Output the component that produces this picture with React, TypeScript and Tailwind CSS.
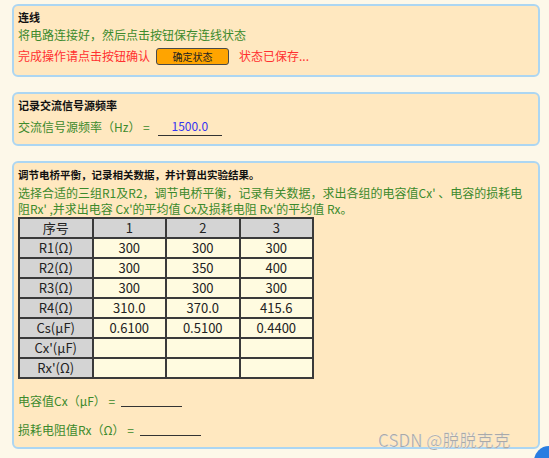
import React from "react";

const font = { fontFamily: '"Noto Sans CJK SC", "Noto Sans", sans-serif' };

const rows: { label: string; values: string[] }[] = [
  { label: "R1(Ω)", values: ["300", "300", "300"] },
  { label: "R2(Ω)", values: ["300", "350", "400"] },
  { label: "R3(Ω)", values: ["300", "300", "300"] },
  { label: "R4(Ω)", values: ["310.0", "370.0", "415.6"] },
  { label: "Cs(μF)", values: ["0.6100", "0.5100", "0.4400"] },
  { label: "Cx'(μF)", values: ["", "", ""] },
  { label: "Rx'(Ω)", values: ["", "", ""] },
];

function Panel({ className, children }: { className: string; children: React.ReactNode }) {
  return (
    <div
      className={`w-[528px] rounded-[6px] border-2 border-[#acd6f2] bg-[#ffe8c0] px-[4px] ${className}`}
    >
      {children}
    </div>
  );
}

function Cell({ children, head }: { children?: React.ReactNode; head?: boolean }) {
  return (
    <div
      className={`flex h-[18px] items-center justify-center text-[13px] text-[#222] ${
        head ? "bg-[#d4d4d4]" : "bg-[#fffbe0]"
      }`}
    >
      {children}
    </div>
  );
}

export default function App() {
  return (
    <div
      className="relative h-[458px] w-full overflow-hidden bg-[#fdf8e9] pl-[12px] pt-[4px]"
      style={font}
    >
      <div className="flex flex-col gap-[15px]">
        <Panel className="h-[73px] pt-[2px]">
          <div className="h-[18px] text-[11px] font-bold leading-[18px] text-[#111]">连线</div>
          <div className="h-[18px] text-[12px] leading-[18px] text-[#3c8a2c]">
            将电路连接好，然后点击按钮保存连线状态
          </div>
          <div className="mt-[2px] flex h-[20px] items-center text-[12px] text-[#ff3030]">
            <span>完成操作请点击按钮确认</span>
            <button className="ml-[6px] flex h-[17px] w-[73px] items-center justify-center rounded-[3px] border border-[#4a4a4a] bg-[#ffa400] text-[10px] text-[#222]">
              确定状态
            </button>
            <span className="ml-[10px]">状态已保存...</span>
          </div>
        </Panel>

        <Panel className="h-[54px] pt-[2px]">
          <div className="h-[18px] text-[11px] font-bold leading-[18px] text-[#111]">
            记录交流信号源频率
          </div>
          <div className="mt-[4px] flex h-[18px] items-center text-[12px] text-[#3c8a2c]">
            <span>交流信号源频率（Hz） =</span>
            <span className="ml-[8px] flex h-[18px] w-[64px] items-center justify-center border-b border-[#333] pb-[2px] text-[12px] text-[#3535f0]">
              1500.0
            </span>
          </div>
        </Panel>

        <Panel className="h-[288px] pt-[3px]">
          <div className="h-[18px] text-[10.5px] font-bold leading-[18px] text-[#111]">
            调节电桥平衡，记录相关数据，并计算出实验结果。
          </div>
          <div className="mt-[1px] w-[510px] text-[12px] leading-[16px] text-[#3c8a2c]">
            选择合适的三组R1及R2，调节电桥平衡，记录有关数据，求出各组的电容值Cx' 、电容的损耗电
            <br />
            阻Rx' ,并求出电容 Cx'的平均值 Cx及损耗电阻 Rx'的平均值 Rx。
          </div>
          <div className="grid w-[296px] grid-cols-4 gap-[2px] bg-[#3a3a3a] p-[2px]">
            <Cell head>序号</Cell>
            <Cell head>1</Cell>
            <Cell head>2</Cell>
            <Cell head>3</Cell>
            {rows.map((r) => (
              <React.Fragment key={r.label}>
                <Cell head>{r.label}</Cell>
                {r.values.map((v, i) => (
                  <Cell key={i}>{v}</Cell>
                ))}
              </React.Fragment>
            ))}
          </div>
          <div className="mt-[13px] flex h-[18px] items-center text-[12px] text-[#3c8a2c]">
            <span>电容值Cx（μF） =</span>
            <span className="ml-[6px] mt-[10px] w-[61px] border-b border-[#333]" />
          </div>
          <div className="mt-[11px] flex h-[18px] items-center text-[12px] text-[#3c8a2c]">
            <span>损耗电阻值Rx（Ω） =</span>
            <span className="ml-[6px] mt-[10px] w-[61px] border-b border-[#333]" />
          </div>
        </Panel>
      </div>

      <div
        className="absolute left-[378px] top-[430px] text-[17px] leading-[20px] text-[#a9a9a9]"
        style={{ ...font, WebkitTextStroke: "0.2px #fff" }}
      >
        CSDN @脱脱克克
      </div>
      <div className="absolute left-[534px] top-[446px] h-[30px] w-[30px] rounded-full bg-[#2a7de1]" />
    </div>
  );
}
